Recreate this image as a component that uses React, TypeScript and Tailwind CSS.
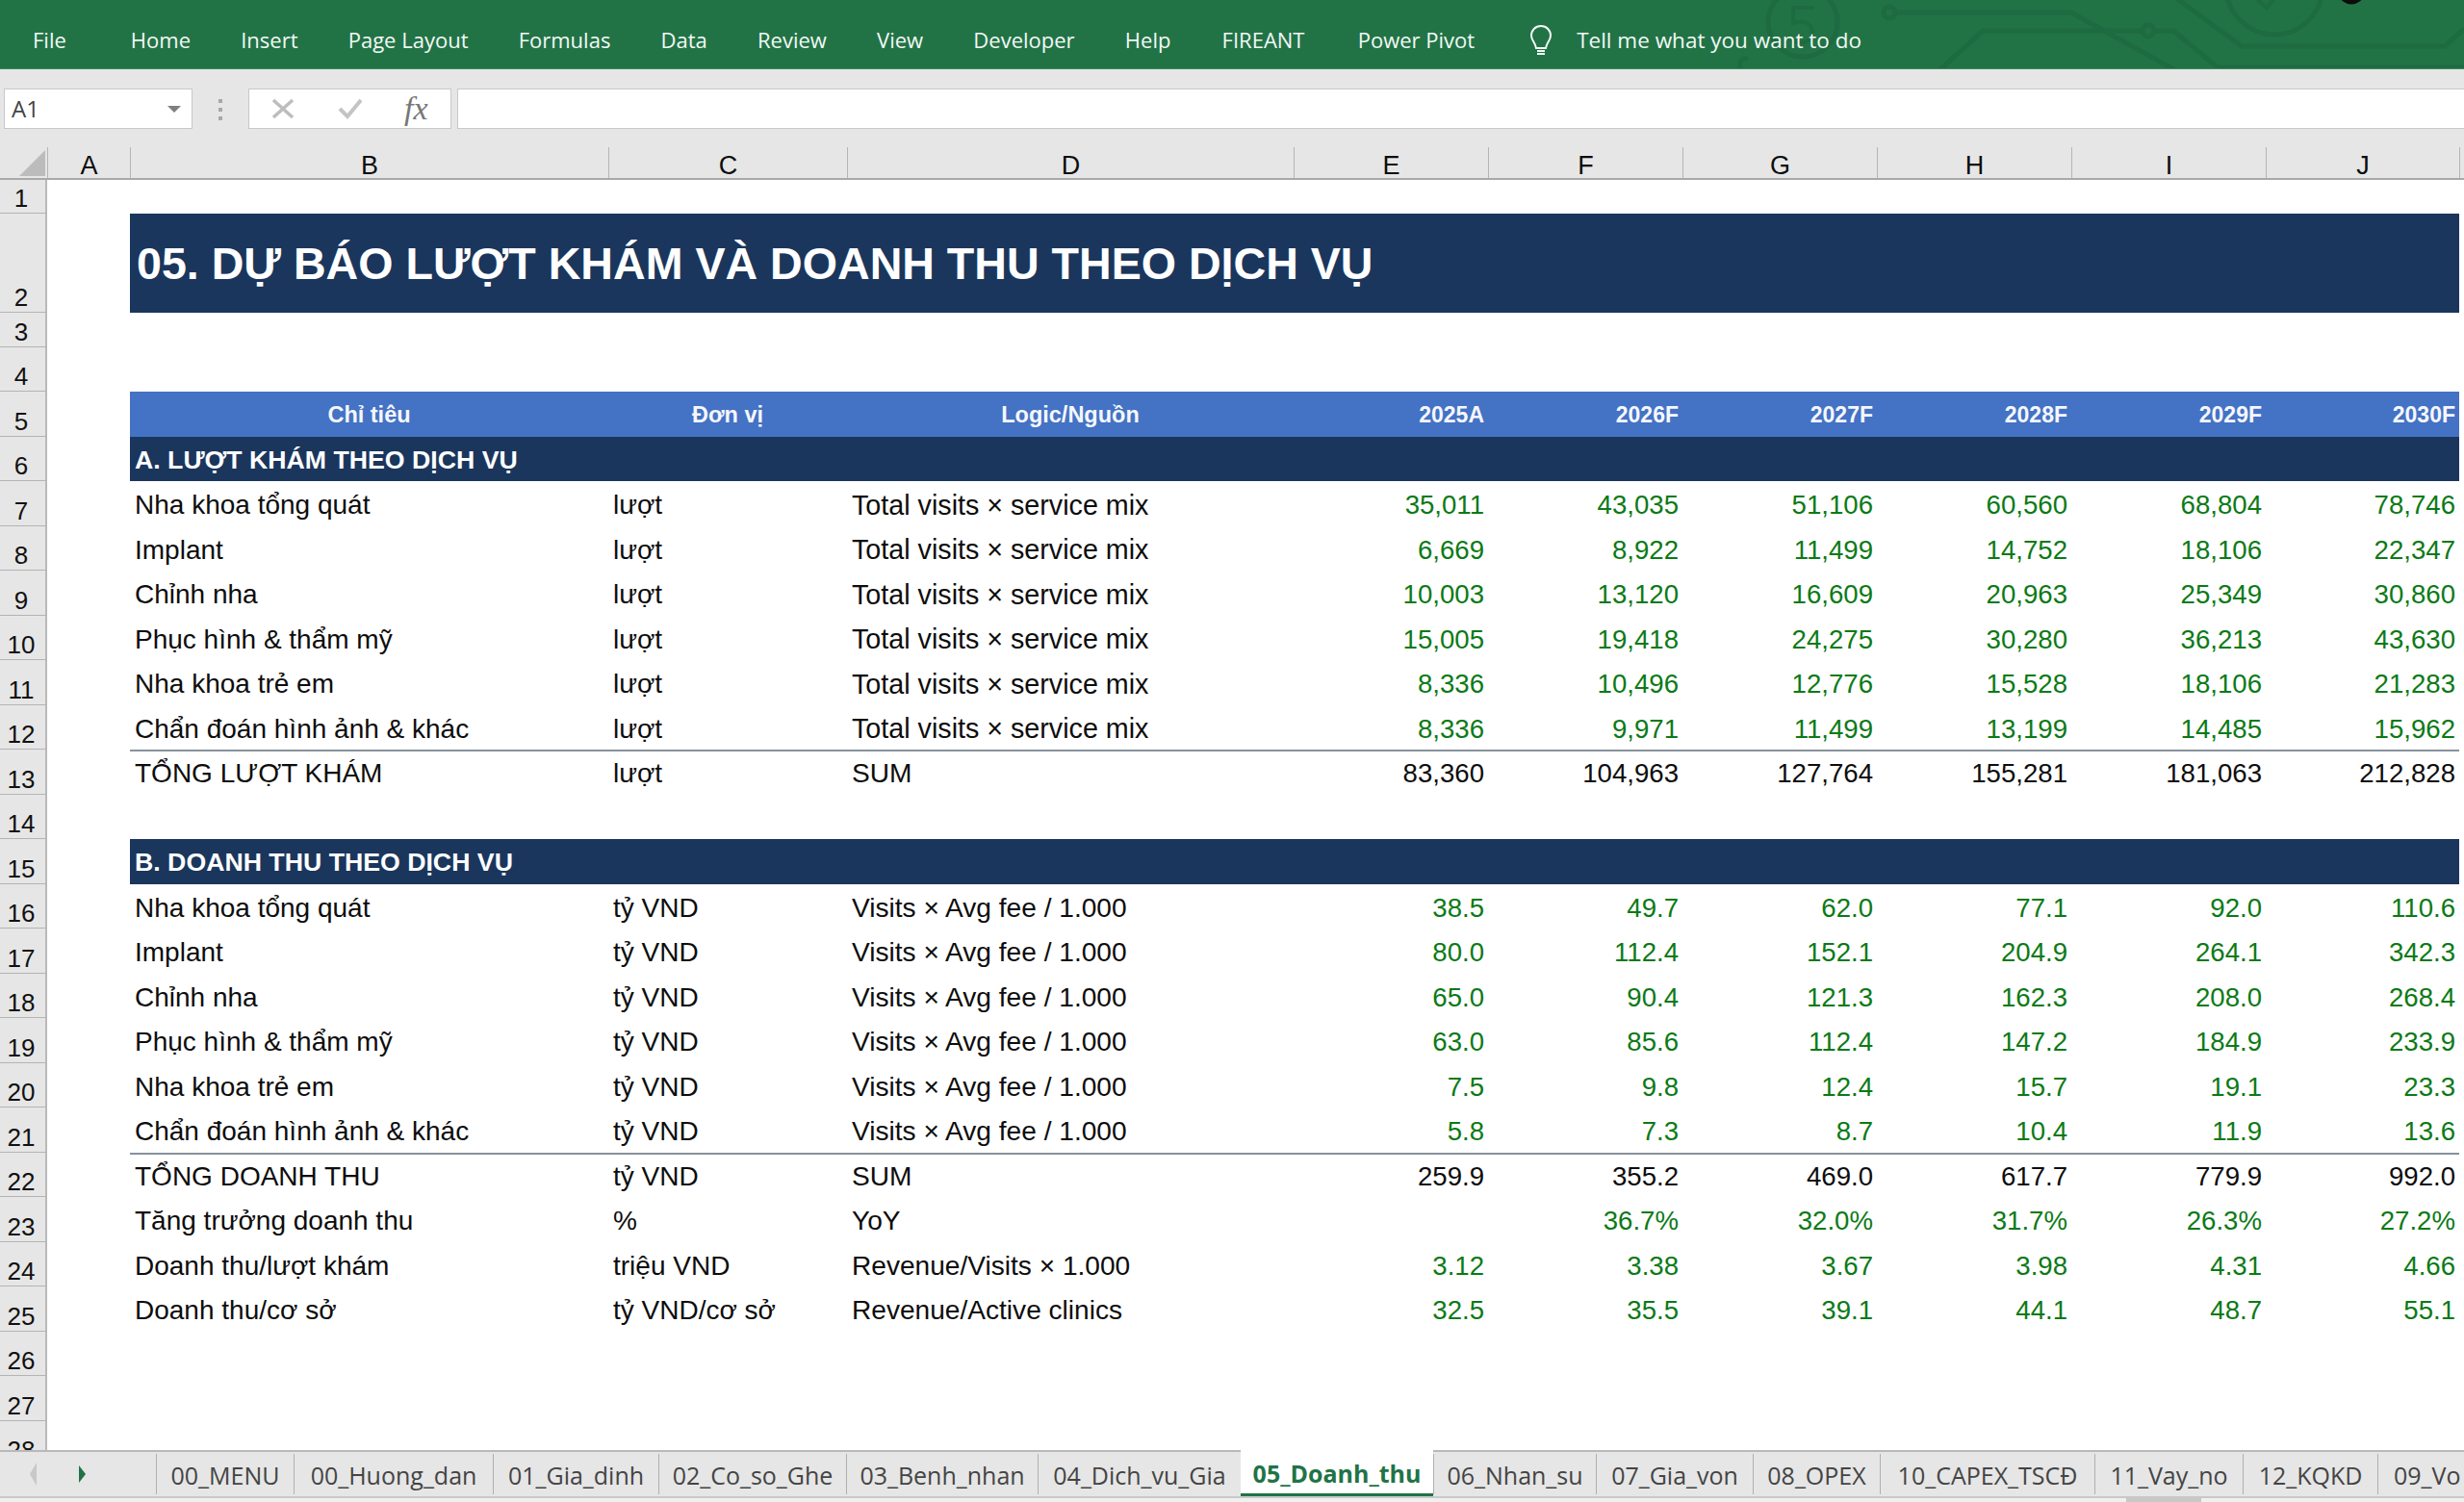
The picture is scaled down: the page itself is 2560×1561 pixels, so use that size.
import React from "react";

const GRID =
  "grid grid-cols-[49px_86px_497px_248px_464px_202px_202px_202px_202px_202px_201px_1fr]";
const ARIAL = "font-['Liberation_Sans',Arial,sans-serif]";
const SEGOE = "font-['Open_Sans','Noto_Sans',sans-serif]";

const RIBBON_TABS: [string, string][] = [
  ["Home", ""],
  ["Insert", ""],
  ["Page Layout", ""],
  ["Formulas", ""],
  ["Data", ""],
  ["Review", ""],
  ["View", ""],
  ["Developer", ""],
  ["Help", ""],
  ["FIREANT", "ml-[1px]"],
  ["Power Pivot", "ml-[3px]"],
];

const COLS = ["A", "B", "C", "D", "E", "F", "G", "H", "I", "J"];

const SHEET_TABS: [string, number][] = [
  ["00_MENU", 143],
  ["00_Huong_dan", 207],
  ["01_Gia_dinh", 172],
  ["02_Co_so_Ghe", 195],
  ["03_Benh_nhan", 199],
  ["04_Dich_vu_Gia", 211],
  ["05_Doanh_thu", 200],
  ["06_Nhan_su", 169],
  ["07_Gia_von", 163],
  ["08_OPEX", 132],
  ["10_CAPEX_TSCĐ", 223],
  ["11_Vay_no", 154],
  ["12_KQKD", 140],
  ["09_Vo", 90],
];

type RowData = { label: string; unit: string; logic: string; vals: string[]; total?: boolean };

const SECTION_A: RowData[] = [
  { label: "Nha khoa tổng quát", unit: "lượt", logic: "Total visits × service mix", vals: ["35,011", "43,035", "51,106", "60,560", "68,804", "78,746"] },
  { label: "Implant", unit: "lượt", logic: "Total visits × service mix", vals: ["6,669", "8,922", "11,499", "14,752", "18,106", "22,347"] },
  { label: "Chỉnh nha", unit: "lượt", logic: "Total visits × service mix", vals: ["10,003", "13,120", "16,609", "20,963", "25,349", "30,860"] },
  { label: "Phục hình & thẩm mỹ", unit: "lượt", logic: "Total visits × service mix", vals: ["15,005", "19,418", "24,275", "30,280", "36,213", "43,630"] },
  { label: "Nha khoa trẻ em", unit: "lượt", logic: "Total visits × service mix", vals: ["8,336", "10,496", "12,776", "15,528", "18,106", "21,283"] },
  { label: "Chẩn đoán hình ảnh & khác", unit: "lượt", logic: "Total visits × service mix", vals: ["8,336", "9,971", "11,499", "13,199", "14,485", "15,962"] },
  { label: "TỔNG LƯỢT KHÁM", unit: "lượt", logic: "SUM", vals: ["83,360", "104,963", "127,764", "155,281", "181,063", "212,828"], total: true },
];

const SECTION_B: RowData[] = [
  { label: "Nha khoa tổng quát", unit: "tỷ VND", logic: "Visits × Avg fee / 1.000", vals: ["38.5", "49.7", "62.0", "77.1", "92.0", "110.6"] },
  { label: "Implant", unit: "tỷ VND", logic: "Visits × Avg fee / 1.000", vals: ["80.0", "112.4", "152.1", "204.9", "264.1", "342.3"] },
  { label: "Chỉnh nha", unit: "tỷ VND", logic: "Visits × Avg fee / 1.000", vals: ["65.0", "90.4", "121.3", "162.3", "208.0", "268.4"] },
  { label: "Phục hình & thẩm mỹ", unit: "tỷ VND", logic: "Visits × Avg fee / 1.000", vals: ["63.0", "85.6", "112.4", "147.2", "184.9", "233.9"] },
  { label: "Nha khoa trẻ em", unit: "tỷ VND", logic: "Visits × Avg fee / 1.000", vals: ["7.5", "9.8", "12.4", "15.7", "19.1", "23.3"] },
  { label: "Chẩn đoán hình ảnh & khác", unit: "tỷ VND", logic: "Visits × Avg fee / 1.000", vals: ["5.8", "7.3", "8.7", "10.4", "11.9", "13.6"] },
  { label: "TỔNG DOANH THU", unit: "tỷ VND", logic: "SUM", vals: ["259.9", "355.2", "469.0", "617.7", "779.9", "992.0"], total: true },
  { label: "Tăng trưởng doanh thu", unit: "%", logic: "YoY", vals: ["", "36.7%", "32.0%", "31.7%", "26.3%", "27.2%"] },
  { label: "Doanh thu/lượt khám", unit: "triệu VND", logic: "Revenue/Visits × 1.000", vals: ["3.12", "3.38", "3.67", "3.98", "4.31", "4.66"] },
  { label: "Doanh thu/cơ sở", unit: "tỷ VND/cơ sở", logic: "Revenue/Active clinics", vals: ["32.5", "35.5", "39.1", "44.1", "48.7", "55.1"] },
];

function RowNum({ n }: { n: number }) {
  return (
    <div className="flex items-end justify-center border-b border-r-2 border-b-[#b4b4b4] border-r-[#b9b9b9] bg-[#e6e6e6] pb-[2px] pr-[3px] text-[26px] leading-[26px] text-[#111]">
      {n}
    </div>
  );
}

function Row({ n, h, children }: { n: number; h: string; children?: React.ReactNode }) {
  return (
    <div className={`${GRID} ${h}`}>
      <RowNum n={n} />
      <div />
      {children}
    </div>
  );
}

const H46 = "h-[46.5px]";

function DataRow({ n, row }: { n: number; row: RowData }) {
  const cell = `flex items-center leading-none ${row.total ? "border-t-2 border-t-[#87919c] pt-[2px]" : "pt-[4px]"}`;
  const logicSize = row.logic.startsWith("Total") ? "text-[28.7px]" : "text-[28.1px]";
  return (
    <Row n={n} h={H46}>
      <div className={`${cell} pl-[5px] text-[28px] text-[#0d0d0d]`}>{row.label}</div>
      <div className={`${cell} pl-[5px] text-[28px] text-[#0d0d0d]`}>{row.unit}</div>
      <div className={`${cell} pl-[5px] ${logicSize} text-[#0d0d0d]`}>{row.logic}</div>
      {row.vals.map((v, i) => (
        <div
          key={i}
          className={`${cell} justify-end pr-[4px] text-[27.6px] ${row.total ? "text-[#0d0d0d]" : "text-[#0b7a16]"}`}
        >
          {v}
        </div>
      ))}
    </Row>
  );
}

function SectionRow({ n, title }: { n: number; title: string }) {
  return (
    <Row n={n} h={H46}>
      <div className="col-span-9 flex items-center bg-[#1a365d] pl-[5px] pt-[3px] text-[26.7px] font-bold leading-none text-white">
        {title}
      </div>
    </Row>
  );
}

function Ribbon() {
  return (
    <div className={`relative flex h-[72px] shrink-0 items-center overflow-hidden border-b border-b-[#3c8a5f] bg-[#217346] pl-[34px] pt-[12px] text-[22px] text-[#f3f8f5] ${SEGOE}`}>
      <svg
        className="absolute right-0 top-0"
        width="760"
        height="72"
        viewBox="1800 0 760 72"
        fill="none"
        stroke="#1e6a41"
        strokeWidth="5"
      >
        <circle cx="1873" cy="23" r="36" />
        <path d="M1885 8h-22v16c10-4 20 0 20 10s-14 14-22 6" strokeWidth="4" />
        <circle cx="1963" cy="13" r="6" />
        <path d="M1969 13H2152L2262 74" />
        <path d="M2014 74L2060 32H2226" />
        <circle cx="2232" cy="32" r="6" />
        <path d="M2238 32H2258L2304 70H2560" />
        <path d="M2258 -4L2329 48H2540L2560 30" />
        <circle cx="2363" cy="-14" r="50" />
        <path d="M1808 74V66a5 5 0 0 1 8 -4" />
        <path d="M2343 -2L2355 8L2363 -2" strokeWidth="4" />
        <ellipse cx="2443" cy="-6" rx="10" ry="8" stroke="#0c0c0c" strokeWidth="5" />
      </svg>
      <span className="relative mr-[67px]">File</span>
      <div className="relative flex gap-[52.2px]">
        {RIBBON_TABS.map(([t, m]) => (
          <span key={t} className={m}>
            {t}
          </span>
        ))}
      </div>
      <svg className="relative ml-[57px] mr-[25px]" width="24" height="34" viewBox="0 0 24 34" fill="none" stroke="#f3f8f5" strokeWidth="2">
        <path d="M12 2C6 2 2 6.500 2 12c0 5 4 7 5 13h10c1-6 5-8 5-13 0-5.500-4-10-10-10z" />
        <path d="M8 28h8M8 31h8" />
      </svg>
      <span className="relative text-[22.5px]">Tell me what you want to do</span>
    </div>
  );
}

function FormulaBar() {
  return (
    <div className="flex h-[81px] shrink-0 items-start bg-[#e6e6e6] pl-[4px] pt-[20px]">
      <div className={`flex h-[42px] w-[196px] items-center justify-between border border-[#c8c8c8] bg-white pl-[7px] pr-[11px] text-[24px] text-[#444] ${SEGOE}`}>
        <span>A1</span>
        <span className="h-0 w-0 border-x-[7px] border-t-[7px] border-x-transparent border-t-[#7f7f7f]" />
      </div>
      <div className="flex w-[58px] flex-col items-center gap-[5px] pt-[11px]">
        <span className="h-[4px] w-[4px] bg-[#a8a8a8]" />
        <span className="h-[4px] w-[4px] bg-[#a8a8a8]" />
        <span className="h-[4px] w-[4px] bg-[#a8a8a8]" />
      </div>
      <div className="flex h-[42px] w-[211px] items-center border border-[#c8c8c8] bg-white">
        <svg className="ml-[23px]" width="24" height="22" viewBox="0 0 24 22" fill="none" stroke="#bdbdbd" strokeWidth="3.500">
          <path d="M2 2l20 18M22 2L2 20" />
        </svg>
        <svg className="ml-[45px]" width="26" height="22" viewBox="0 0 26 22" fill="none" stroke="#c4c4c4" strokeWidth="4">
          <path d="M2 11l8 8L24 2" />
        </svg>
        <span className="ml-[43px] font-['Liberation_Serif',serif] text-[34px] italic leading-none text-[#777]">fx</span>
      </div>
      <div className="ml-[6px] h-[42px] flex-1 border-y border-l border-[#c8c8c8] bg-white" />
    </div>
  );
}

function ColumnHeaders() {
  return (
    <div className={`${GRID} h-[34px] shrink-0 border-b-2 border-b-[#a9a9a9] bg-[#e6e6e6] ${ARIAL}`}>
      <div className="relative">
        <div className="absolute bottom-[2px] right-[2px] h-0 w-0 border-b-[27px] border-l-[27px] border-b-[#bcbcbc] border-l-transparent" />
      </div>
      {COLS.map((c) => (
        <div
          key={c}
          className="flex items-end justify-center border-l border-l-[#b5b5b5] text-[27px] leading-[25px] text-[#0d0d0d]"
        >
          {c}
        </div>
      ))}
      <div className="border-l border-l-[#b5b5b5]" />
    </div>
  );
}

function Sheet() {
  const head = "flex items-center bg-[#4472c4] pt-[3px] font-bold leading-none text-[#f4f7fc]";
  return (
    <div className={`h-[1320px] shrink-0 overflow-hidden bg-white ${ARIAL}`}>
      <Row n={1} h="h-[35px]" />
      <Row n={2} h="h-[103px]">
        <div className="col-span-9 flex items-center bg-[#1a365d] pl-[7px] pt-[2px] text-[46.6px] font-bold leading-none text-white">
          05. DỰ BÁO LƯỢT KHÁM VÀ DOANH THU THEO DỊCH VỤ
        </div>
      </Row>
      <Row n={3} h="h-[36px]" />
      <Row n={4} h="h-[46px]" />
      <Row n={5} h="h-[46.5px]">
        <div className={`${head} justify-center text-[23.5px]`}>Chỉ tiêu</div>
        <div className={`${head} justify-center text-[23.5px]`}>Đơn vị</div>
        <div className={`${head} justify-center text-[23.5px]`}>Logic/Nguồn</div>
        {["2025A", "2026F", "2027F", "2028F", "2029F", "2030F"].map((y) => (
          <div key={y} className={`${head} justify-end pr-[4px] text-[23px]`}>
            {y}
          </div>
        ))}
      </Row>
      <SectionRow n={6} title="A. LƯỢT KHÁM THEO DỊCH VỤ" />
      {SECTION_A.map((r, i) => (
        <DataRow key={r.label} n={7 + i} row={r} />
      ))}
      <Row n={14} h={H46} />
      <SectionRow n={15} title="B. DOANH THU THEO DỊCH VỤ" />
      {SECTION_B.map((r, i) => (
        <DataRow key={r.label} n={16 + i} row={r} />
      ))}
      <Row n={26} h={H46} />
      <Row n={27} h={H46} />
      <Row n={28} h={H46} />
    </div>
  );
}

function SheetTabs() {
  return (
    <div className={`flex h-[50px] shrink-0 border-b-2 border-t-2 border-b-[#c9c9c9] border-t-[#b9b9b9] bg-[#e6e6e6] text-[25px] text-[#444] ${SEGOE}`}>
      <div className="flex w-[162px] shrink-0 items-center">
        <span className="ml-[31px] h-0 w-0 border-y-[12px] border-r-[7px] border-y-transparent border-r-[#c8c8c8]" />
        <span className="ml-[44px] h-0 w-0 border-y-[9px] border-l-[7px] border-y-transparent border-l-[#217346]" />
      </div>
      {SHEET_TABS.map(([name, w]) => {
        const active = name === "05_Doanh_thu";
        const last = name === "09_Vo";
        return (
          <div
            key={name}
            style={{ width: w }}
            className={
              active
                ? "-mt-[2px] flex shrink-0 items-center justify-center border-b-[3px] border-b-[#217346] bg-white pt-[5px] font-bold text-[#217346]"
                : last
                  ? "my-[2px] flex shrink-0 items-center whitespace-nowrap border-l border-l-[#b0b0b0] pl-[16px] pt-[4px]"
                  : "my-[2px] flex shrink-0 items-center justify-center whitespace-nowrap border-l border-l-[#b0b0b0] pt-[4px]"
            }
          >
            {name}
          </div>
        );
      })}
    </div>
  );
}

export default function App() {
  return (
    <div className="flex h-[1561px] w-[2560px] flex-col overflow-hidden bg-white">
      <Ribbon />
      <FormulaBar />
      <ColumnHeaders />
      <Sheet />
      <SheetTabs />
      <div className="flex h-[4px] shrink-0 bg-[#f0f0f0]">
        <div className="ml-[2209px] h-full w-[78px] bg-[#c8c8c8]" />
      </div>
    </div>
  );
}
